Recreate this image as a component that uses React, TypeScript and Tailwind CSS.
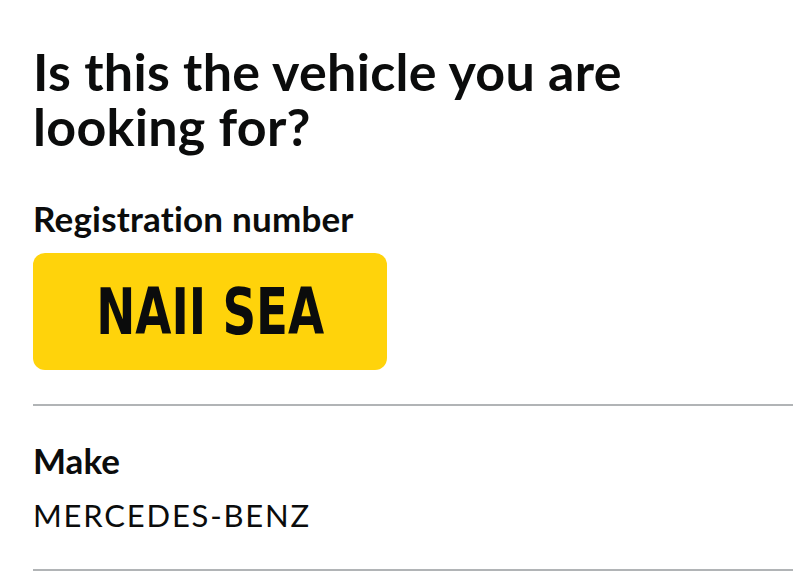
import React from "react";

export default function App() {
  return (
    <div className="min-h-screen bg-white text-[#0b0c0c] pl-[33px] pr-[7px]" style={{ fontFamily: 'Lato, Arial, sans-serif' }}>
      <h1 className="pt-[44px] text-[52px] leading-[55px] font-bold tracking-[0.3px]">
        Is this the vehicle you are looking for?
      </h1>
      <div className="mt-[44px] text-[35px] leading-[40px] font-bold tracking-[0.2px]">Registration number</div>
      <div className="mt-[15px] w-[354px] h-[117px] rounded-[12px] bg-[#ffd30b] flex items-center justify-center">
        <span className="font-bold text-[64px] leading-none scale-x-[0.73] whitespace-nowrap" style={{ fontFamily: '"DejaVu Sans", sans-serif' }}>
          NAII SEA
        </span>
      </div>
      <div className="mt-[34px] h-[2px] bg-[#b1b4b6]" />
      <div className="mt-[34px] text-[35px] leading-[40px] font-bold">Make</div>
      <div className="mt-[17px] text-[31px] leading-[36px] tracking-[1.8px]">MERCEDES-BENZ</div>
      <div className="mt-[36px] h-[2px] bg-[#b1b4b6]" />
    </div>
  );
}
